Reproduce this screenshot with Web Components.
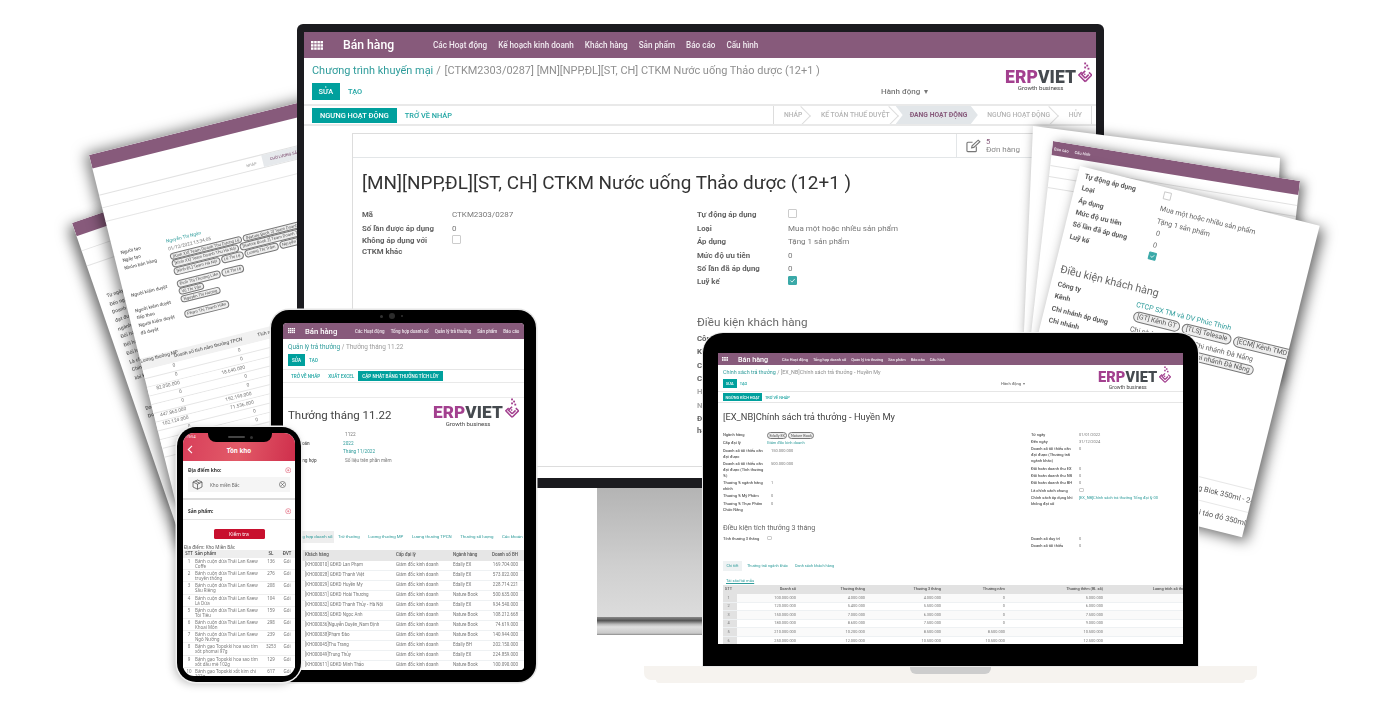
<!DOCTYPE html>
<html lang="vi">
<head>
<meta charset="utf-8">
<title>ERPViet</title>
<style>
  html, body { margin: 0; background: #fff; overflow: hidden; }
  mock-canvas { font-family: Roboto, "Liberation Sans", sans-serif; }
</style>
</head>
<body>
<mock-canvas>
  <paper-sheet style="left:72px;top:223px;width:200px;height:340px;transform:rotate(-19deg);--sh:-5px 3px 14px rgba(0,0,0,.6)" band><sheet-left-back></sheet-left-back></paper-sheet>
  <paper-sheet style="left:89px;top:155px;width:262px;height:360px;transform:rotate(-14deg);--sh:-4px -2px 14px rgba(0,0,0,.5)" band><sheet-left-front></sheet-left-front></paper-sheet>
  <monitor-stand></monitor-stand>
  <monitor-frame><monitor-screen></monitor-screen></monitor-frame>
  <paper-sheet style="left:1033px;top:126px;width:247px;height:210px;transform:matrix(1,.13,-.044,1,0,0);--sh:3px 0 12px rgba(0,0,0,.5)"></paper-sheet>
  <paper-sheet style="left:1053px;top:141px;width:247px;height:200px;transform:matrix(1,.162,-.114,1,0,0);--sh:4px 1px 12px rgba(0,0,0,.55)" band><sheet-right-mid></sheet-right-mid></paper-sheet>
  <paper-sheet style="left:1080px;top:166px;width:247px;height:321px;transform:rotate(14deg);--sh:5px 3px 14px rgba(0,0,0,.6)"><sheet-right-front></sheet-right-front></paper-sheet>
  <tablet-frame><tablet-screen></tablet-screen></tablet-frame>
  <phone-frame><phone-screen></phone-screen></phone-frame>
  <laptop-base></laptop-base>
  <laptop-frame><laptop-screen></laptop-screen></laptop-frame>
</mock-canvas>

<script>
const TABLES = {
  tablet: {
    head: ['STT', 'Khách hàng', 'Cấp đại lý', 'Ngành hàng', 'Doanh số BH'],
    rows: [
      ['1', '[KH000010] GĐKD Lan Phạm', 'Giám đốc kinh doanh', 'Edally EX', '169.704.000'],
      ['2', '[KH000028] GĐKD Thanh Việt', 'Giám đốc kinh doanh', 'Edally EX', '573.022.000'],
      ['3', '[KH000029] GĐKD Huyền My', 'Giám đốc kinh doanh', 'Edally EX', '228.714.221'],
      ['4', '[KH000031] GĐKD Hoài Thương', 'Giám đốc kinh doanh', 'Nature Book', '500.635.000'],
      ['5', '[KH000032] GĐKD Thanh Thủy - Hà Nội', 'Giám đốc kinh doanh', 'Edally EX', '934.540.000'],
      ['6', '[KH000035] GĐKD Ngọc Anh', 'Giám đốc kinh doanh', 'Nature Book', '108.212.668'],
      ['7', '[KH000036]Nguyễn Duyên_Nam Định', 'Giám đốc kinh doanh', 'Nature Book', '74.619.000'],
      ['8', '[KH000038]Phạm Đào', 'Giám đốc kinh doanh', 'Nature Book', '140.944.000'],
      ['9', '[KH000045]Thu Trang', 'Giám đốc kinh doanh', 'Edally BH', '202.150.000'],
      ['10', '[KH000049]Trung Thủy', 'Giám đốc kinh doanh', 'Edally EX', '224.859.000'],
      ['11', '[KH000611] GĐKD Minh Thảo', 'Giám đốc kinh doanh', 'Nature Book', '100.090.000']
    ]
  },
  laptop: {
    head: ['STT', 'Doanh số', 'Thưởng tháng', 'Thưởng 3 tháng', 'Thưởng năm', 'Thưởng thêm (BL số)', 'Lương trích số thưởng tháng'],
    rows: [
      ['1', '100.000.000', '4.000.000', '4.000.000', '0', '5.000.000', '0'],
      ['2', '120.000.000', '5.400.000', '5.500.000', '0', '6.000.000', '0'],
      ['3', '150.000.000', '7.000.000', '6.300.000', '0', '7.500.000', '0'],
      ['4', '180.000.000', '8.600.000', '7.500.000', '0', '9.000.000', '0'],
      ['5', '210.000.000', '10.200.000', '8.500.000', '8.500.000', '10.500.000', '8.500.000'],
      ['6', '250.000.000', '12.000.000', '10.500.000', '10.500.000', '12.500.000', '10.500.000']
    ]
  },
  phone: {
    head: ['STT', 'Sản phẩm', 'SL', 'ĐVT'],
    rows: [
      ['1', 'Bánh cuộn dừa Thái Lan Kaew Coffe', '136', 'Gói'],
      ['2', 'Bánh cuộn dừa Thái Lan Kaew truyền thống', '276', 'Gói'],
      ['3', 'Bánh cuộn dừa Thái Lan Kaew Sầu Riêng', '208', 'Gói'],
      ['4', 'Bánh cuộn dừa Thái Lan Kaew Lá Dứa', '104', 'Gói'],
      ['5', 'Bánh cuộn dừa Thái Lan Kaew Tỏi Tiêu', '159', 'Gói'],
      ['6', 'Bánh cuộn dừa Thái Lan Kaew Khoai Môn', '298', 'Gói'],
      ['7', 'Bánh cuộn dừa Thái Lan Kaew Ngô Nướng', '239', 'Gói'],
      ['8', 'Bánh gạo Topokki hoa sao tím xốt phomai 97g', '3253', 'Gói'],
      ['9', 'Bánh gạo Topokki hoa sao tím xốt dầu mè 102g', '129', 'Gói'],
      ['10', 'Bánh gạo Topokki xốt kim chi 102g', '617', 'Gói']
    ]
  },
  sheet: {
    head: ['Lương thưởng MP', 'Doanh số tích năm thưởng TPCN', 'Tích năm thưởng TPCN', 'Thưởng năm'],
    rows: [
      ['0', '0', '0', '0'],
      ['0', '0', '30.000', '0'],
      ['82.050.000', '18.640.000', '0', '0'],
      ['0', '0', '0', '0'],
      ['0', '0', '0', '0'],
      ['447.865.000', '192.199.000', '0', '0'],
      ['102.124.000', '71.536.000', '0', '0'],
      ['0', '0', '0', '0'],
      ['0', '0', '0', '0'],
      ['0', '0', '0', '0']
    ]
  }
};

class ShadowEl extends HTMLElement {
  constructor() {
    super();
    this.attachShadow({ mode: 'open' });
  }
  connectedCallback() {
    if (!this.shadowRoot.innerHTML) this.shadowRoot.innerHTML = this.render();
  }
}

const GRID_ICON = `<svg viewBox="0 0 12 9" fill="#fff"><rect width="2.5" height="2.4"/><rect x="3.2" width="2.5" height="2.4"/><rect x="6.4" width="2.5" height="2.4"/><rect x="9.5" width="2.5" height="2.4"/><rect y="3.2" width="2.5" height="2.4"/><rect x="3.2" y="3.2" width="2.5" height="2.4"/><rect x="6.4" y="3.2" width="2.5" height="2.4"/><rect x="9.5" y="3.2" width="2.5" height="2.4"/><rect y="6.4" width="2.5" height="2.4"/><rect x="3.2" y="6.4" width="2.5" height="2.4"/><rect x="6.4" y="6.4" width="2.5" height="2.4"/><rect x="9.5" y="6.4" width="2.5" height="2.4"/></svg>`;

class MockCanvas extends ShadowEl {
  render() {
    return `<style>
      :host { display: block; position: relative; width: 1400px; height: 704px; overflow: hidden; filter: blur(.5px); }
    </style><slot></slot>`;
  }
}

class ErpLogo extends ShadowEl {
  render() {
    return `<style>
      :host { display: inline-block; line-height: 1; }
      .top { display: flex; align-items: flex-end; gap: .1em; }
      .word { font: 900 1em/.8 Roboto, sans-serif; letter-spacing: .005em; color: #a3408f; white-space: nowrap; padding-bottom: .04em; }
      .word b { font-weight: 900; color: #454a4f; }
      svg { display: block; height: 1.18em; width: .83em; margin-bottom: .1em; }
      .tag { font: 400 .35em/1.1 Roboto, sans-serif; color: #444; margin: .1em 0 0 2.1em; white-space: nowrap; }
    </style>
    <div class="top"><span class="word">ERP<b>VIET</b></span>
      <svg viewBox="0 0 14 20" fill="none" stroke="#a3408f" stroke-width="1.5">
        <path d="M7 19 13.3 12.6 10.6 10M7 19 .7 12.6 3.6 9.8"/><path d="M7 15.6 3.4 12 7 8.6M7 15.6 10.4 12.2"/><path d="M7 12.4 6 11.4"/>
        <g fill="#a3408f" stroke="none"><rect x="6" y=".5" width="1.8" height="1.8"/><rect x="8" y="2.6" width="1.8" height="1.8"/><rect x="6" y="4.4" width="1.8" height="1.8"/><rect x="9.2" y="5.6" width="1.8" height="1.8"/></g>
      </svg></div>
    <div class="tag">Growth business</div>`;
  }
}

class AppNav extends ShadowEl {
  render() {
    return `<style>
      :host { display: flex; align-items: center; height: var(--nh); background: #875a7b; color: #fff; overflow: hidden; white-space: nowrap; }
      .ic { width: var(--iw); padding-left: var(--il); box-sizing: border-box; flex: none; }
      svg { display: block; width: var(--is); }
      .brand { width: var(--bw); flex: none; font: 500 var(--bf) Roboto, sans-serif; }
      nav { display: flex; gap: var(--mg); font: 500 var(--mf) Roboto, sans-serif; color: #f1eaf0; }
    </style>
    <div class="ic">${GRID_ICON}</div>
    <div class="brand">${this.getAttribute('brand')}</div>
    <nav>${this.getAttribute('menu').split('|').map(m => `<span>${m}</span>`).join('')}</nav>`;
  }
}

class OdooBtn extends ShadowEl {
  render() {
    return `<style>
      :host { display: inline-flex; align-items: center; height: var(--bh); padding: 0 var(--bp); font: 500 var(--bfs) Roboto, sans-serif; color: #1fa5a3; white-space: nowrap; }
      :host([primary]) { background: #00a09d; color: #fff; }
    </style><slot></slot>`;
  }
}

class StatusBar extends ShadowEl {
  render() {
    const active = this.getAttribute('active');
    const items = this.getAttribute('items').split('|').map((s, i, all) =>
      `<span class="${s === active ? 'on' : ''} ${i === all.length - 1 ? 'last' : ''}">${s}</span>`).join('');
    return `<style>
      :host { display: flex; height: 100%; align-items: stretch; border-left: 1px solid #ddd; border-right: 1px solid #ddd; font: 500 6.75px Roboto, sans-serif; color: #b4b4b4; white-space: nowrap; }
      span { display: flex; align-items: center; padding: 0 9px 0 9.5px; position: relative; overflow: hidden; }
      span::after { content: ""; position: absolute; right: 3px; top: 2.5px; width: 13px; height: 13px; border-top: 1px solid #ddd; border-right: 1px solid #ddd; transform: rotate(45deg); }
      span.last::after { display: none; }
      span.on { background: #e2e6e9; color: #875a7b; font-weight: 700; margin-left: -3px; padding: 0 10.5px 0 14px; clip-path: polygon(0 0, calc(100% - 7px) 0, 100% 50%, calc(100% - 7px) 100%, 0 100%, 7px 50%); }
      span.on::after { display: none; }
    </style>${items}`;
  }
}

class FormRow extends ShadowEl {
  render() {
    return `<style>
      :host { display: grid; grid-template-columns: var(--lw) 1fr; min-height: var(--rh, 0); line-height: var(--lh); align-items: start; align-content: center; }
      .l { font-size: var(--lfs, inherit); font-weight: var(--lfw, 500); color: var(--lc, #555); padding-right: var(--lp, 4px); }
      .v { color: var(--vc, #777); white-space: nowrap; padding-left: var(--vp, 0); }
    </style><div class="l">${this.getAttribute('label')}</div><div class="v"><slot></slot></div>`;
  }
}

class TagPill extends ShadowEl {
  render() {
    return `<style>
      :host { display: inline-block; vertical-align: top; border: var(--pb, .6px) solid #777; border-radius: 99px; padding: 0 var(--pp, 2px); line-height: var(--ph); color: #555; background: #eee; white-space: nowrap; margin-right: 1px; }
    </style><slot></slot>`;
  }
}

class CheckBox extends ShadowEl {
  render() {
    return `<style>
      :host { display: inline-block; box-sizing: border-box; width: var(--cs); height: var(--cs); border: 1px solid #ccc; border-radius: 1px; background: #fff; vertical-align: top; }
      :host([checked]) { background: #3aa9a8; border-color: #3aa9a8; }
      svg { display: block; width: 100%; height: 100%; }
    </style>${this.hasAttribute('checked') ? '<svg viewBox="0 0 10 10" fill="none" stroke="#d6f0ef" stroke-width="1.4"><path d="M2 5 4.3 7.3 8.2 2.8"/></svg>' : ''}`;
  }
}

class DataGrid extends ShadowEl {
  render() {
    const t = TABLES[this.getAttribute('src')];
    const al = this.getAttribute('align').split(' ');
    const cell = (v, i) => `<div class="c ${al[i]} i${i}">${v}</div>`;
    return `<style>
      :host { display: block; font-size: var(--gf); color: var(--gc, #777); }
      .r { display: grid; grid-template-columns: var(--cols); height: var(--gr); align-items: var(--ga, center); border-bottom: 1px solid var(--gl, #eef1f3); box-sizing: border-box; }
      .r.h { height: var(--gh); background: var(--ghb, #e6e6e6); border-bottom: 0; font-weight: 500; color: var(--ghc, #555); }
      .r:nth-child(odd):not(.h) { background: var(--alt, #fff); }
      .c { padding: var(--cp, 0 2px); white-space: var(--ws, nowrap); line-height: var(--cl, 1.1); min-width: 0; box-sizing: border-box; }
      .l { text-align: left; } .e { text-align: right; } .m { text-align: center; }
      .i0 { background: var(--stt, transparent); height: 100%; display: var(--stt-d, block); align-items: center; justify-content: center; }
    </style>
    <div class="r h">${t.head.map(cell).join('')}</div>
    ${t.rows.map(r => `<div class="r">${r.map(cell).join('')}</div>`).join('')}`;
  }
}

class MonitorFrame extends ShadowEl {
  render() {
    return `<style>
      :host { position: absolute; left: 297px; top: 24px; width: 807px; height: 464px; box-sizing: border-box; padding: 8px 8px 10px 7px; background: #1b1b1f; border-radius: 6px 6px 0 0; }
      .s { height: 100%; background: #fff; overflow: hidden; }
    </style><div class="s"><slot></slot></div>`;
  }
}

class MonitorStand extends ShadowEl {
  render() {
    return `<style>
      :host { position: absolute; left: 597px; top: 488px; width: 206px; height: 147px; display: flex; flex-direction: column; }
      .neck { height: 129px; background: linear-gradient(#b4b4b4, #cfcfcf 60%, #dcdcdc); }
      .foot { height: 18px; background: linear-gradient(#8a8a8a, #555 20%, #b9b9b9 40%, #e0e0e0 55%, #c9c9c9 90%, #888); }
    </style><div class="neck"></div><div class="foot"></div>`;
  }
}

class MonitorScreen extends ShadowEl {
  render() {
    return `<style>
      :host { display: block; height: 100%; position: relative; font: 400 8px Roboto, sans-serif; color: #666; --bh: 17px; --bp: 6.5px; --bfs: 7.4px; --lw: 90px; --lh: 11px; --rh: 13.4px; --cs: 9px; --lfs: 7.8px; --lfw: 700; --lc: #626262; }
      app-nav { --nh: 26px; --iw: 39px; --il: 7px; --is: 12px; --bw: 90px; --bf: 12.2px; --mf: 8.15px; --mg: 11px; }
      .crumb { margin: 6px 8px 0; line-height: 14px; font-size: 10.95px; color: #8f8f8f; white-space: nowrap; }
      .crumb a { color: #2f9c9b; margin-right: 3px; }
      .crumb i { font-style: normal; margin-right: 1px; }
      .acts { display: grid; grid-template-columns: 569px auto; align-items: center; margin-top: 5px; padding: 0 0 4px 8px; border-bottom: 2px solid #e9e9e9; }
      .acts div { display: flex; }
      .acts odoo-btn + odoo-btn { margin-left: 2px; }
      .acts span { color: #777; font-weight: 500; font-size: 8px; }
      .status { display: flex; justify-content: space-between; align-items: center; height: 20px; box-sizing: border-box; padding: 0 4px 0 8px; border-bottom: 2px solid #e9e9e9; --bh: 15px; --bp: 8px; }
      .status > div { display: flex; }
      .status .right { height: 100%; }
      .sheet { margin: 7px 48px 0; border: 1px solid #ddd; padding: 0 0 30px 9px; background: #fff; }
      .btns { height: 23px; margin-left: -9px; display: flex; justify-content: flex-end; border-bottom: 1px solid #e3e6e8; }
      .stat { width: 91px; box-sizing: border-box; border-left: 1px solid #e3e6e8; display: flex; align-items: center; gap: 5px; padding-left: 9px; line-height: 8px; color: #888; }
      .stat b { display: block; font-weight: 400; color: #875a7b; font-size: 7.5px; }
      .stat svg { width: 15px; height: 14px; }
      h1 { margin: 13px 0 0; font: 400 18.9px/24px Roboto, sans-serif; color: #333; white-space: nowrap; }
      .cols { display: flex; margin-top: 13.3px; }
      .col { width: 335px; flex: none; }
      .col + .col { --lw: 91px; }
      h2 { margin: 26px 0 3px; font: 400 11.7px/14px Roboto, sans-serif; color: #6a6a6a; white-space: nowrap; }
      erp-logo { position: absolute; left: 701px; top: 30px; font-size: 17.5px; }
    </style>
    <app-nav brand="Bán hàng" menu="Các Hoạt động|Kế hoạch kinh doanh|Khách hàng|Sản phẩm|Báo cáo|Cấu hình"></app-nav>
    <div class="crumb"><a>Chương trình khuyến mại</a><i>/</i> [CTKM2303/0287] [MN][NPP,ĐL][ST, CH] CTKM Nước uống Thảo dược (12+1 )</div>
    <div class="acts"><div><odoo-btn primary>SỬA</odoo-btn><odoo-btn>TẠO</odoo-btn></div><span>Hành động &nbsp;▾</span></div>
    <div class="status">
      <div><odoo-btn primary>NGƯNG HOẠT ĐỘNG</odoo-btn><odoo-btn>TRỞ VỀ NHÁP</odoo-btn></div>
      <div class="right"><status-bar items="NHÁP|KẾ TOÁN THUẾ DUYỆT|ĐANG HOẠT ĐỘNG|NGƯNG HOẠT ĐỘNG|HỦY" active="ĐANG HOẠT ĐỘNG"></status-bar></div>
    </div>
    <div class="sheet">
      <div class="btns"><div class="stat">
        <svg viewBox="0 0 16 14" fill="none" stroke="#777" stroke-width="1.2"><path d="M11 7.5V12a1 1 0 0 1-1 1H2a1 1 0 0 1-1-1V4a1 1 0 0 1 1-1h5"/><path d="M6 9l.5-2.2L13 .8l1.8 1.7-6.5 6z"/></svg>
        <div><b>5</b>Đơn hàng</div></div></div>
      <h1>[MN][NPP,ĐL][ST, CH] CTKM Nước uống Thảo dược (12+1 )</h1>
      <div class="cols">
        <div class="col">
          <form-row label="Mã">CTKM2303/0287</form-row>
          <form-row label="Số lần được áp dụng">0</form-row>
          <form-row label="Không áp dụng với CTKM khác"><check-box></check-box></form-row>
        </div>
        <div class="col">
          <form-row label="Tự động áp dụng"><check-box></check-box></form-row>
          <form-row label="Loại">Mua một hoặc nhiều sản phẩm</form-row>
          <form-row label="Áp dụng">Tặng 1 sản phẩm</form-row>
          <form-row label="Mức độ ưu tiên">0</form-row>
          <form-row label="Số lần đã áp dụng">0</form-row>
          <form-row label="Luỹ kế"><check-box checked></check-box></form-row>
          <h2>Điều kiện khách hàng</h2>
          <form-row label="Công"></form-row>
          <form-row label="Kênh"></form-row>
          <form-row label="Chi"></form-row>
          <form-row label="Chi"></form-row>
          <form-row label="Hình" style="--lc:#aaa"></form-row>
          <form-row label="Ngày" style="--lc:#aaa"></form-row>
          <form-row label="Điều"></form-row>
          <form-row label="hàng" style="--rh:11px"></form-row>
        </div>
      </div>
    </div>
    <erp-logo></erp-logo>`;
  }
}

class TabletFrame extends ShadowEl {
  render() {
    return `<style>
      :host { position: absolute; left: 271px; top: 310px; width: 265px; height: 372px; box-sizing: border-box; padding: 13px 12px 12px 12px; background: #000; border-radius: 18px; box-shadow: 0 0 0 1.5px #e6e6e6; }
      .s { height: 100%; background: #fff; overflow: hidden; border-radius: 4px; }
      .cam { position: absolute; left: 109px; top: 3px; display: flex; align-items: center; gap: 6px; }
      .cam i { display: block; width: 3px; height: 3px; border-radius: 50%; background: #333; }
      .cam i:nth-child(2) { width: 6px; height: 6px; background: #2c2c2c; }
      .cam i:nth-child(3) { width: 2px; height: 2px; }
    </style><div class="cam"><i></i><i></i><i></i></div><div class="s"><slot></slot></div>`;
  }
}

class TabletScreen extends ShadowEl {
  render() {
    return `<style>
      :host { display: block; height: 100%; position: relative; font: 400 4.7px Roboto, sans-serif; color: #777; --bfs: 4.6px; --lw: 55px; --lh: 8.7px; }
      app-nav { --nh: 16px; --iw: 22px; --il: 5px; --is: 7px; --bw: 50px; --bf: 7.7px; --mf: 4.45px; --mg: 6.1px; }
      .crumb { margin: 4px 5px 0; line-height: 8px; font-size: 6.4px; color: #9a9a9a; white-space: nowrap; }
      .crumb a { color: #2f9c9b; }
      .acts { display: flex; padding: 3px 5px 3px; border-bottom: 1px solid #e6e6e6; --bh: 12px; --bp: 4px; }
      .row2 { display: flex; align-items: center; height: 12px; padding-left: 4px; border-bottom: 1px solid #e9e9e9; --bh: 10px; --bp: 4px; }
      .space { height: 14px; border-bottom: 1px solid #ececec; }
      h1 { margin: 9px 0 0 5px; font: 400 11.5px/16px Roboto, sans-serif; color: #444; white-space: nowrap; }
      .fields { margin: 8px 0 0 5px; --vp: 0; }
      .tabs { display: flex; align-items: center; margin-top: 65px; height: 12px; color: #2f9c9b; white-space: nowrap; font-size: 4.4px; }
      .tabs span { margin-right: 8.5px; }
      .tabs span:first-child { background: #eee; width: 51px; flex: none; box-sizing: border-box; padding-left: 12px; line-height: 12px; margin-right: 4px; }
      data-grid { display: block; margin-top: 7px; width: 241px; --gf: 4.5px; --cols: 22px 91px 57px 35px 30px; --gh: 11px; --gr: 10px; --ghb: #e6e6e6; --cp: 0; }
      erp-logo { position: absolute; left: 150px; top: 75px; font-size: 17.2px; }
    </style>
    <app-nav brand="Bán hàng" menu="Các Hoạt động|Tổng hợp doanh số|Quản lý trả thưởng|Sản phẩm|Báo cáo"></app-nav>
    <div class="crumb"><a>Quản lý trả thưởng</a> / Thưởng tháng 11.22</div>
    <div class="acts"><odoo-btn primary>SỬA</odoo-btn><odoo-btn>TẠO</odoo-btn></div>
    <div class="row2"><odoo-btn>TRỞ VỀ NHÁP</odoo-btn><odoo-btn>XUẤT EXCEL</odoo-btn><odoo-btn primary>CẬP NHẬT BẢNG THƯỞNG TÍCH LŨY</odoo-btn></div>
    <div class="space"></div>
    <h1>Thưởng tháng 11.22</h1>
    <div class="fields">
      <form-row label="Mã"><span style="padding-left:2px">1122</span></form-row>
      <form-row label="Kỳ kế toán"><span style="color:#2f9c9b">2022</span></form-row>
      <form-row label="Kỳ"><span style="color:#2f9c9b">Tháng 11/2022</span></form-row>
      <form-row label="Loại tổng hợp"><span style="padding-left:2px">Số liệu trên phần mềm</span></form-row>
    </div>
    <div class="tabs"><span>Tổng hợp doanh số</span><span>Trừ thưởng</span><span>Lương thưởng MP</span><span>Lương thưởng TPCN</span><span>Thưởng số lượng</span><span>Các khoản</span></div>
    <data-grid src="tablet" align="l l l l e"></data-grid>
    <erp-logo></erp-logo>`;
  }
}

class PhoneFrame extends ShadowEl {
  render() {
    return `<style>
      :host { position: absolute; left: 177px; top: 427px; width: 124px; height: 255px; box-sizing: border-box; padding: 6px; background: #000; border-radius: 19px; box-shadow: 0 0 0 1.5px #f0f0f0, -3px 2px 8px rgba(0,0,0,.25); }
      .s { height: 100%; background: #fff; overflow: hidden; border-radius: 11px; }
      .notch { position: absolute; left: 31px; top: 5px; width: 64px; height: 10px; background: #000; border-radius: 0 0 8px 8px; display: flex; justify-content: center; align-items: center; gap: 5px; }
      .notch i { width: 17px; height: 2px; border-radius: 2px; background: #444; }
      .notch b { width: 3px; height: 3px; border-radius: 50%; background: #333; }
    </style><div class="s"><slot></slot></div><div class="notch"><i></i><b></b></div>`;
  }
}

class PhoneScreen extends ShadowEl {
  render() {
    const plus = `<svg viewBox="0 0 10 10" fill="none" stroke="#dc4a63" stroke-width=".8"><circle cx="5" cy="5" r="4"/><path d="M3.2 5h3.6M5 3.2v3.6"/></svg>`;
    return `<style>
      :host { display: block; height: 100%; font: 400 4.7px "Noto Sans", "Open Sans", sans-serif; color: #777; }
      .head { height: 28px; background: linear-gradient(100deg, #d83f5a, #e25a68 50%, #cf2f4c); color: #fff; position: relative; display: flex; align-items: flex-end; justify-content: center; padding-bottom: 6px; box-sizing: border-box; font-weight: 700; font-size: 6.2px; }
      .clock { position: absolute; left: 3px; top: 1px; font-size: 3.8px; font-weight: 400; }
      .back { position: absolute; left: 4px; bottom: 7px; width: 6px; height: 9px; }
      .sec { display: flex; justify-content: space-between; align-items: center; padding: 0 4px 0 5px; height: 10px; font-weight: 700; font-size: 4.9px; color: #333; }
      .sec svg { width: 6.5px; height: 6.5px; }
      .box { display: flex; align-items: center; margin: 2px 5px 0; height: 15px; background: #f5f5f5; padding: 0 4px; color: #666; font-size: 4.6px; }
      .box svg { flex: none; }
      .box span { flex: 1; padding-left: 7px; }
      .div1 { height: 2px; background: #dcdcdc; margin: 6px 0; }
      .div2 { height: 1px; background: #e4e4e4; margin-top: 3px; }
      .go { display: flex; justify-content: center; margin-top: 9px; }
      .go span { width: 51px; height: 10px; background: #c8102e; color: #fff; text-align: center; line-height: 10px; border-radius: 1.5px; font-size: 5px; }
      .loc { margin: 5px 0 0 1px; line-height: 6px; font-size: 4.6px; color: #555; white-space: nowrap; }
      data-grid { --gf: 4.45px; --cols: 12px 68px 16px 16px; --gh: 8px; --gr: 12.2px; --ghb: #eee; --ghc: #333; --ws: normal; --ga: start; --cp: 1px 0 0; --cl: 5px; --gl: #eee; --gc: #777; }
    </style>
    <div class="head"><span class="clock">19:54</span>
      <svg class="back" viewBox="0 0 6 9" fill="none" stroke="#fff" stroke-width="1.1"><path d="M5 .8 1.3 4.5 5 8.2"/></svg>
      <span>Tồn kho</span></div>
    <div class="sec" style="margin-top:4px">Địa điểm kho:${plus}</div>
    <div class="box">
      <svg width="11" height="11" viewBox="0 0 11 11" fill="none" stroke="#444" stroke-width=".7"><path d="M5.5 1 10 3v5l-4.5 2.2L1 8V3zM1 3l4.5 2.2L10 3M5.5 5.2v5M3.2 2l4.5 2.2"/></svg>
      <span>Kho miền Bắc</span>
      <svg width="7" height="7" viewBox="0 0 7 7" fill="none" stroke="#444" stroke-width=".6"><circle cx="3.5" cy="3.5" r="3"/><path d="M2.2 2.2l2.6 2.6M4.8 2.2 2.2 4.8"/></svg>
    </div>
    <div class="div1"></div>
    <div class="sec">Sản phẩm:${plus}</div>
    <div class="div2"></div>
    <div class="go"><span>Kiểm tra</span></div>
    <div class="loc">Địa điểm: Kho Miền Bắc</div>
    <data-grid src="phone" align="m l m m"></data-grid>`;
  }
}

class LaptopFrame extends ShadowEl {
  render() {
    return `<style>
      :host { position: absolute; left: 703px; top: 333px; width: 495px; height: 333px; box-sizing: border-box; padding: 20px 15px 22px; background: #000; border-radius: 20px 20px 0 0; box-shadow: 0 0 0 1px #e9e9e9; }
      .s { height: 100%; background: #fff; overflow: hidden; }
    </style><div class="s"><slot></slot></div>`;
  }
}

class LaptopBase extends ShadowEl {
  render() {
    return `<style>
      :host { position: absolute; left: 644px; top: 666px; width: 613px; height: 17px; display: flex; flex-direction: column; align-items: center; }
      .top { width: 100%; height: 14px; background: #f6f3ef; border-radius: 0 0 7px 7px; display: flex; justify-content: center; }
      .bot { width: 589px; height: 3px; background: #f6f3ef; border-radius: 0 0 5px 5px; }
      .notch { width: 81px; height: 8px; background: #cdcdcd; border-radius: 0 0 6px 6px; }
    </style><div class="top"><div class="notch"></div></div><div class="bot"></div>`;
  }
}

class LaptopScreen extends ShadowEl {
  render() {
    return `<style>
      :host { display: block; height: 100%; position: relative; font: 400 4px Roboto, sans-serif; color: #777; --bfs: 3.9px; --lw: 44px; --lh: 5.9px; --cs: 5px; }
      app-nav { --nh: 12px; --iw: 20px; --il: 4px; --is: 6px; --bw: 44px; --bf: 7.2px; --mf: 3.9px; --mg: 5px; }
      .crumb { margin: 3px 5px 0; line-height: 8px; font-size: 5.4px; color: #8f8f8f; white-space: nowrap; }
      .crumb a { color: #2f9c9b; }
      .acts { display: grid; grid-template-columns: 278px auto; align-items: center; margin-top: 3px; padding: 0 5px 3px; border-bottom: 1px solid #e6e6e6; --bh: 9px; --bp: 3px; }
      .acts div { display: flex; }
      .acts span { font-size: 4.1px; font-weight: 500; }
      .row2 { display: flex; align-items: center; height: 10px; padding-left: 5px; border-bottom: 1px solid #e6e6e6; --bh: 8px; --bp: 2.5px; }
      h1 { margin: 7px 0 0 5px; font: 400 9.3px/14px Roboto, sans-serif; color: #444; white-space: nowrap; }
      .cols { display: flex; height: 89px; margin: 7.5px 0 0 5px; }
      .col { width: 308px; flex: none; display: flex; flex-direction: column; gap: 1.5px; --lp: 1px; }
      .col + .col { --lw: 48px; --lp: 5px; }
      tag-pill { --ph: 5.2px; --pb: .5px; --pp: 1.5px; font-size: 3.8px; }
      .link { color: #2f9c9b; }
      h2 { margin: 3px 0 0 5px; font: 400 7.1px/8px Roboto, sans-serif; color: #666; white-space: nowrap; }
      .cols.two { height: 17px; margin-top: 4px; }
      .tabs { display: flex; align-items: center; height: 10px; margin: 8px 0 0 5px; color: #2f9c9b; white-space: nowrap; font-size: 3.9px; }
      .tabs span:first-child { background: #eef2f3; width: 19px; text-align: center; line-height: 10px; margin-right: 5px; }
      .tabs span:nth-child(2) { margin-right: 7px; }
      .dl { margin: 7px 0 0 8px; line-height: 5px; color: #2f9c9b; text-decoration: underline; font-size: 4.1px; }
      data-grid { margin: 2.5px 0 0 5px; width: 490px; --gf: 3.9px; --cols: 14px 62px 69px 76px 64px 98px 99px; --gh: 9px; --gr: 8.6px; --ghb: #e2e2e2; --stt: #e2e2e2; --cp: 0 3px 0 0; --ghc: #555; --stt-d: flex; --alt: #fafafa; }
      erp-logo { position: absolute; left: 380px; top: 13px; font-size: 14.6px; }
    </style>
    <app-nav brand="Bán hàng" menu="Các Hoạt động|Tổng hợp doanh số|Quản lý trả thưởng|Sản phẩm|Báo cáo|Cấu hình"></app-nav>
    <div class="crumb"><a>Chính sách trả thưởng</a> / [EX_NB]Chính sách trả thưởng - Huyền My</div>
    <div class="acts"><div><odoo-btn primary>SỬA</odoo-btn><odoo-btn>TẠO</odoo-btn></div><span>Hành động &nbsp;▾</span></div>
    <div class="row2"><odoo-btn primary>NGỪNG KÍCH HOẠT</odoo-btn><odoo-btn>TRỞ VỀ NHÁP</odoo-btn></div>
    <h1>[EX_NB]Chính sách trả thưởng - Huyền My</h1>
    <div class="cols">
      <div class="col">
        <form-row label="Ngành hàng"><tag-pill>Edally EX</tag-pill><tag-pill>Nature Book</tag-pill></form-row>
        <form-row label="Cấp đại lý"><span class="link">Giám đốc kinh doanh</span></form-row>
        <form-row label="Doanh số tối thiểu cần đạt được" style="--vp:4px">150.000.000</form-row>
        <form-row label="Doanh số tối thiểu cần đạt được (Tính thưởng %)" style="--vp:4px">500.000.000</form-row>
        <form-row label="Thưởng % ngành hàng chính" style="--vp:4px">1</form-row>
        <form-row label="Thưởng % Mỹ Phẩm" style="--vp:4px">0</form-row>
        <form-row label="Thưởng % Thực Phẩm Chức Năng" style="--vp:4px">0</form-row>
      </div>
      <div class="col">
        <form-row label="Từ ngày">01/01/2022</form-row>
        <form-row label="Đến ngày">31/12/2024</form-row>
        <form-row label="Doanh số tối thiểu cần đạt được (Thưởng trái ngành khác)">0</form-row>
        <form-row label="Đối hoàn doanh thu EX">0</form-row>
        <form-row label="Đối hoàn doanh thu NB">0</form-row>
        <form-row label="Đối hoàn doanh thu BH">0</form-row>
        <form-row label="Là chính sách chung"><check-box style="--cs:4.5px"></check-box></form-row>
        <form-row label="Chính sách áp dụng khi không đạt số"><span class="link">[EX_NB]Chính sách trả thưởng Tổng đại lý 00</span></form-row>
      </div>
    </div>
    <h2>Điều kiện tích thưởng 3 tháng</h2>
    <div class="cols two">
      <div class="col"><form-row label="Tính thưởng 3 tháng"><check-box style="--cs:4.5px"></check-box></form-row></div>
      <div class="col"><form-row label="Doanh số duy trì">0</form-row><form-row label="Doanh số tối thiểu">0</form-row></div>
    </div>
    <div class="tabs"><span>Chi tiết</span><span>Thưởng trái ngành khác</span><span>Danh sách khách hàng</span></div>
    <div class="dl">Tải xác/tải mẫu</div>
    <data-grid src="laptop" align="m e e e e e e"></data-grid>
    <erp-logo></erp-logo>`;
  }
}

class PaperSheet extends ShadowEl {
  render() {
    return `<style>
      :host { position: absolute; display: block; background: #fff; transform-origin: 0 0; box-shadow: var(--sh); }
      .clip { height: 100%; overflow: hidden; }
      .band { height: 14px; background: #875a7b; }
    </style><div class="clip">${this.hasAttribute('band') ? '<div class="band"></div>' : ''}<slot></slot></div>`;
  }
}

class SheetLeftBack extends ShadowEl {
  render() {
    const lines = ['Từ ngày', 'Đến ngày', 'Doanh số tối thiểu cần', 'đạt được (Thưởng trái', 'ngành khác)', 'Đối hoàn doanh thu EX', 'Đối hoàn doanh thu NB', 'Đối hoàn doanh thu BH', 'Là chính sách chung', 'Chính sách áp dụng', 'khi không đạt số'];
    return `<style>
      :host { display: block; font: 400 5px Roboto, sans-serif; color: #666; }
      .rule { border-bottom: 1px solid #e4e4e4; height: 15px; }
      .list { margin: 30px 0 0 9px; }
      .list div { height: 8.7px; line-height: 8.7px; white-space: nowrap; font-weight: 500; }
      .low { margin: 23px 0 0 9px; }
    </style>
    <div class="rule"></div><div class="rule"></div>
    <div class="list">${lines.map(l => `<div>${l}</div>`).join('')}</div>
    <div class="list low"><div>Doanh số tối thiểu</div><div>Doanh số duy trì</div></div>`;
  }
}

class SheetLeftFront extends ShadowEl {
  render() {
    return `<style>
      :host { display: block; font: 400 4.7px Roboto, sans-serif; color: #777; --lw: 47px; --lh: 7.8px; --lc: #666; --ph: 5.6px; --pb: .5px; --pp: 2px; }
      .st { display: flex; margin-top: 27px; height: 12px; border-top: 1px solid #e2e2e2; border-bottom: 1px solid #e2e2e2; padding-left: 150px; align-items: center; font-size: 3.9px; font-weight: 500; color: #aaa; white-space: nowrap; }
      .st b { font-weight: 500; background: #e6e9ec; line-height: 12px; padding: 0 20px 0 8px; color: #875a7b; margin-left: 6px; }
      .r2 { height: 13px; border-bottom: 1px solid #e6e6e6; }
      .form { margin: 30px 0 0 7px; }
      tag-pill { font-size: 4.2px; }
      .sp { height: 5px; }
      data-grid { display: block; margin-top: 20px; width: 262px; --gf: 4.8px; --cols: 34px 67px 70px 60px; --gh: 12px; --gr: 9px; --ghb: #f1f1f1; --gl: #e6e6e6; --cp: 0 1px 0 0; --ghc: #666; }
    </style>
    <div class="st">NHÁP<b>CHỜ LƯƠNG SẢN</b></div><div class="r2"></div>
    <div class="form">
      <form-row label="Người tạo"><span style="color:#2f9c9b">Nguyễn Thị Ngân</span></form-row>
      <form-row label="Ngày tạo">01/12/2022 13:34:05</form-row>
      <form-row label="Nhóm bán hàng"><tag-pill>[Kinh XX] Team Doanh Thu Dương Lê</tag-pill><tag-pill>[Nature Book 2] Team Doanh Thu</tag-pill><br><tag-pill>[Kinh XX] Team Doanh Thu Hà Nội</tag-pill><tag-pill>[Nature Book 2] Team Doanh Thu Hà Nội</tag-pill><br><tag-pill>[Kinh ĐL] Team Hà Nội</tag-pill><tag-pill>Lê Thị Lệ</tag-pill><tag-pill>Lương Thị Trâm</tag-pill><tag-pill>Nguyễn Thị Hà</tag-pill></form-row>
      <div class="sp"></div>
      <form-row label="Người kiểm duyệt"><tag-pill>Đinh Thị Thương Liên</tag-pill><tag-pill>Lê Thị Lệ</tag-pill><br><tag-pill>Vũ Thị Vân</tag-pill></form-row>
      <form-row label="Người kiểm duyệt tiếp theo"><tag-pill>Nguyễn Thị Hương</tag-pill></form-row>
      <form-row label="Người kiểm duyệt đã duyệt"><tag-pill>Phạm Thị Thanh Hiền</tag-pill></form-row>
    </div>
    <data-grid src="sheet" align="e e e e"></data-grid>`;
  }
}

class SheetRightMid extends ShadowEl {
  render() {
    return `<style>
      :host { display: block; }
      .lab { position: absolute; top: 0; left: 2px; height: 14px; display: flex; align-items: center; gap: 6px; font: 500 4px Roboto, sans-serif; color: #f1eaf0; }
      .r { height: 10px; border-bottom: 1px solid #e2e2e2; }
      .r:first-of-type { margin-top: 17px; }
    </style>
    <div class="lab"><span>Báo cáo</span><span>Cấu hình</span></div>
    <div class="r"></div><div class="r"></div><div class="r"></div>`;
  }
}

class SheetRightFront extends ShadowEl {
  render() {
    return `<style>
      :host { display: block; height: 100%; font: 400 7.15px Roboto, sans-serif; color: #666; --lw: 81px; --lh: 11px; --rh: 12.3px; --lc: #5b5b5b; --lfw: 700; --lfs: 6.95px; --cs: 8px; --vc: #666; }
      .wrap { padding: 3.5px 0 0 7px; }
      h2 { margin: 20px 0 2px -1px; font: 400 10.7px/15px Roboto, sans-serif; color: #666; white-space: nowrap; }
      tag-pill { --ph: 8.6px; --pb: .8px; --pp: 3px; font-size: 6.9px; margin-right: 2px; }
      .cells { margin-top: 109px; }
      .c { height: 22px; line-height: 22px; border-top: 1px solid #e8e8e8; white-space: nowrap; font-size: 7.5px; color: #555; }
      .c:first-child { padding-left: 160px; }
      .c:last-child { padding-left: 135px; }
    </style>
    <div class="wrap">
      <form-row label="Tự động áp dụng"><check-box></check-box></form-row>
      <form-row label="Loại">Mua một hoặc nhiều sản phẩm</form-row>
      <form-row label="Áp dụng">Tặng 1 sản phẩm</form-row>
      <form-row label="Mức độ ưu tiên"><span style="padding-left:2px">0</span></form-row>
      <form-row label="Số lần đã áp dụng"><span style="padding-left:2px">0</span></form-row>
      <form-row label="Luỹ kế"><check-box checked></check-box></form-row>
      <h2>Điều kiện khách hàng</h2>
      <form-row label="Công ty"><span style="color:#2f9c9b">CTCP SX TM và DV Phúc Thịnh</span></form-row>
      <form-row label="Kênh"><tag-pill>[GT] Kênh GT</tag-pill><tag-pill>[TLS] Telesale</tag-pill><tag-pill>[ECM] Kênh TMDT</tag-pill></form-row>
      <form-row label="Chi nhánh áp dụng">Chi nhánh Hà Nội &nbsp; &nbsp; &nbsp;Chi nhánh Đà Nẵng</form-row>
      <form-row label="Chi nhánh"><tag-pill>Chi nhánh Hà Nội</tag-pill><tag-pill>Chi nhánh Đà Nẵng</tag-pill></form-row>
    </div>
    <div class="cells"><div class="c">Nước uống Biok 350ml - 24 chai</div><div class="c">Thảo dược hạnh chi táo đỏ 350ml</div></div>`;
  }
}

const ELEMENTS = {
  'mock-canvas': MockCanvas, 'erp-logo': ErpLogo, 'app-nav': AppNav, 'odoo-btn': OdooBtn,
  'status-bar': StatusBar, 'form-row': FormRow, 'tag-pill': TagPill, 'check-box': CheckBox,
  'data-grid': DataGrid, 'monitor-frame': MonitorFrame, 'monitor-stand': MonitorStand,
  'monitor-screen': MonitorScreen, 'tablet-frame': TabletFrame, 'tablet-screen': TabletScreen,
  'phone-frame': PhoneFrame, 'phone-screen': PhoneScreen, 'laptop-frame': LaptopFrame,
  'laptop-base': LaptopBase, 'laptop-screen': LaptopScreen, 'paper-sheet': PaperSheet,
  'sheet-left-back': SheetLeftBack, 'sheet-left-front': SheetLeftFront,
  'sheet-right-mid': SheetRightMid, 'sheet-right-front': SheetRightFront
};
Object.entries(ELEMENTS).forEach(([name, cls]) => customElements.define(name, cls));
</script>
</body>
</html>
